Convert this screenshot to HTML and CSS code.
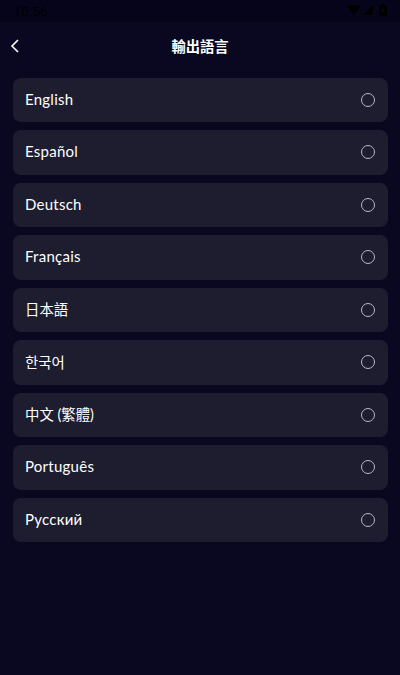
FILE: index.html
```html
<!DOCTYPE html>
<html lang="zh-Hant">
<head>
<meta charset="utf-8">
<title>輸出語言</title>
<link rel="stylesheet" href="styles.css">
</head>
<body>
<div class="status">
  <span class="time">10:56</span>
  <div class="status-icons">
    <svg width="14" height="10" viewBox="0 0 14 10"><path d="M0 1.5 Q7 -1.5 14 1.5 L7 10Z" fill="#000"/></svg>
    <svg width="10" height="10" viewBox="0 0 10 10"><path d="M10 0V10H0Z" fill="#000"/></svg>
    <svg class="battery" width="8" height="12" viewBox="0 0 8 12"><path d="M2.5 0H5.5V1.2H8V12H0V1.2H2.5Z" fill="#000"/><path d="M4.5 3 2.5 7H4L3.5 10 5.5 6H4Z" fill="#0a0820"/></svg>
  </div>
</div>
<header class="nav">
  <svg class="back" width="10" height="14" viewBox="0 0 10 14"><path d="M8 1 2 7l6 6" fill="none" stroke="#fff" stroke-width="1.6"/></svg>
  <h1 class="title">輸出語言</h1>
</header>
<main class="list">
  <div class="row"><span>English</span><i class="radio"></i></div>
  <div class="row"><span>Español</span><i class="radio"></i></div>
  <div class="row"><span>Deutsch</span><i class="radio"></i></div>
  <div class="row"><span>Français</span><i class="radio"></i></div>
  <div class="row"><span class="cjk">日本語</span><i class="radio"></i></div>
  <div class="row"><span class="cjk">한국어</span><i class="radio"></i></div>
  <div class="row"><span class="cjk">中文 (繁體)</span><i class="radio"></i></div>
  <div class="row"><span>Português</span><i class="radio"></i></div>
  <div class="row"><span>Русский</span><i class="radio"></i></div>
</main>
</body>
</html>
```
FILE: styles.css
```css
* { box-sizing: border-box; }
html, body { margin: 0; height: 100%; }
body {
  background: #0a0820;
  color: #fff;
  font-family: Lato, "Noto Sans CJK TC", "Noto Sans CJK KR", sans-serif;
  overflow: hidden;
}
.status {
  height: 22px;
  background: #05041a;
  display: flex;
  align-items: center;
  justify-content: space-between;
  padding: 0 13px 0 14px;
}
.time { color: #000; font: 13px Roboto, sans-serif; letter-spacing: .3px; }
.status-icons { display: flex; align-items: center; gap: 2px; margin-bottom: 2px; }
.battery { margin-left: 4px; }
.nav {
  height: 47.5px;
  display: flex;
  align-items: center;
  justify-content: center;
  position: relative;
}
.back { position: absolute; left: 10px; top: 17px; }
.title { margin: 0; font-size: 14.3px; font-weight: 700; color: #fff; }
.list {
  padding: 8px 12.5px 0;
  display: flex;
  flex-direction: column;
  gap: 8px;
}
.row {
  height: 44.5px;
  background: #1e1d30;
  border-radius: 8px;
  padding: 0 12.5px;
  display: flex;
  align-items: center;
  justify-content: space-between;
  font-size: 15px;
  font-weight: 400;
  letter-spacing: .25px;
}
.row span { position: relative; top: -1px; }
.row .cjk { font-size: 14.4px; letter-spacing: 0; }
.radio {
  width: 14px;
  height: 14px;
  border: 1.2px solid #b8b8c0;
  border-radius: 50%;
}
```
